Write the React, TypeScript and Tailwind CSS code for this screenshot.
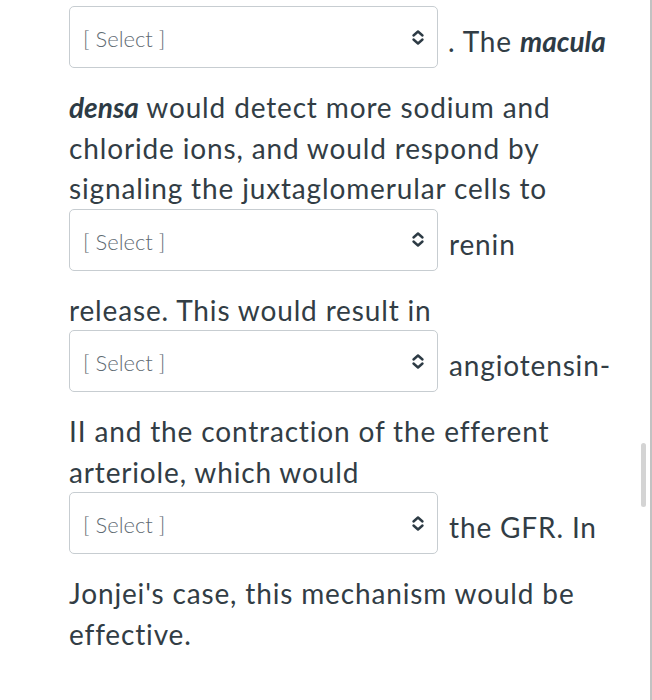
function Select({ after = "mr-[3px]" }: { after?: string }) {
  return (
    <span
      className={`inline-flex w-[369px] h-[62px] mb-[19px] items-center justify-between rounded-[5px] border border-[#c7cdd1] bg-white pl-[13px] pr-[12px] align-[5px] tracking-normal ${after}`}
    >
      <span className="text-[22px] leading-[26px] font-light text-[#5f6b73] pt-[4px]">[ Select ]</span>
      <svg width="14" height="17" viewBox="0 0 14 17" fill="none" stroke="#2d3b45" strokeWidth="2.4" strokeLinecap="round" strokeLinejoin="round">
        <polyline points="2.5,6.5 7,2.5 11.5,6.5" />
        <polyline points="2.5,10.5 7,14.5 11.5,10.5" />
      </svg>
    </span>
  );
}

export default function App() {
  return (
    <div className="relative min-h-screen bg-white border-r-2 border-[#c2c2c2]" style={{ fontFamily: "Lato, 'Open Sans', sans-serif" }}>
      {/* quiz text with inline dropdowns */}
      <div className="pt-[6px] pl-[69px] w-[616px]">
        <p className="text-[28px] leading-[40.5px] tracking-[0.85px] text-[#323d45]">
          <Select after="mr-[10px]" />. The <b className="italic font-bold tracking-normal text-[#2d3b45]">macula densa</b> would detect more sodium and chloride ions, and would respond by signaling the juxtaglomerular cells to <Select /> renin release. This would result in <Select /> angiotensin-II and the contraction of the efferent arteriole, which would <Select /> the GFR. In Jonjei's case, this mechanism would be effective.
        </p>
      </div>

      {/* scrollbar thumb */}
      <div className="absolute left-[641px] top-[443px] w-[5px] h-[64px] rounded-full bg-[#d4d4d4]" />
    </div>
  );
}
